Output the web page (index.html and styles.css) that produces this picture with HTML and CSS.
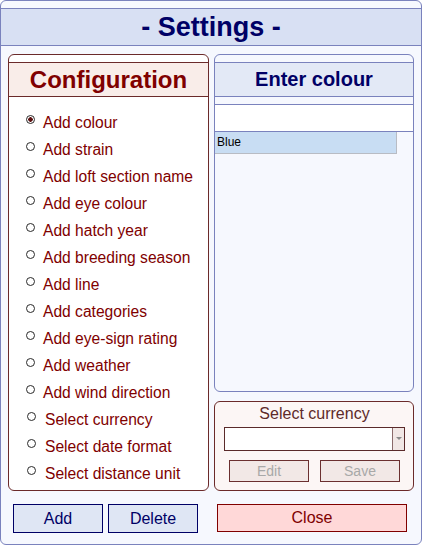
FILE: index.html
```html
<!DOCTYPE html>
<html>
<head>
<meta charset="utf-8">
<link rel="stylesheet" href="styles.css">
</head>
<body>
<div class="window">
  <div class="titlebar">- Settings -</div>
  <div class="content">
    <div class="col left">
      <div class="panel config">
        <div class="phead config-head">Configuration</div>
        <ul class="radios">
          <li class="on"><span class="radio"></span>Add colour</li>
          <li><span class="radio"></span>Add strain</li>
          <li><span class="radio"></span>Add loft section name</li>
          <li><span class="radio"></span>Add eye colour</li>
          <li><span class="radio"></span>Add hatch year</li>
          <li><span class="radio"></span>Add breeding season</li>
          <li><span class="radio"></span>Add line</li>
          <li><span class="radio"></span>Add categories</li>
          <li><span class="radio"></span>Add eye-sign rating</li>
          <li><span class="radio"></span>Add weather</li>
          <li><span class="radio"></span>Add wind direction</li>
          <li class="shift"><span class="radio"></span>Select currency</li>
          <li class="shift"><span class="radio"></span>Select date format</li>
          <li class="shift"><span class="radio"></span>Select distance unit</li>
        </ul>
      </div>
      <div class="btnrow">
        <button class="btn blue">Add</button>
        <button class="btn blue">Delete</button>
      </div>
    </div>
    <div class="col right">
      <div class="panel colour">
        <div class="phead colour-head">Enter colour</div>
        <div class="entry"></div>
        <div class="list">
          <div class="item">Blue</div>
        </div>
      </div>
      <div class="panel currency">
        <div class="cur-title">Select currency</div>
        <div class="select"><span class="sel-val"></span><span class="sel-arrow"></span></div>
        <div class="cur-btns">
          <button class="btn small">Edit</button>
          <button class="btn small">Save</button>
        </div>
      </div>
      <button class="btn close">Close</button>
    </div>
  </div>
</div>
</body>
</html>
```

FILE: styles.css
```css
* { box-sizing: border-box; }
html, body { margin: 0; padding: 0; background: #ffffff; }
body { font-family: "Liberation Sans", Arial, sans-serif; }

.window {
  width: 422px;
  height: 545px;
  border: 1px solid #7a82bd;
  border-radius: 6px;
  background: #f6f8fe;
  overflow: hidden;
}

.titlebar {
  margin-top: 7px;
  height: 38px;
  border-top: 1px solid #7a82bd;
  border-bottom: 1px solid #7a82bd;
  background: #d8e0f3;
  color: #000066;
  font-weight: bold;
  font-size: 27px;
  line-height: 36px;
  text-align: center;
}

.content {
  display: flex;
  gap: 5px;
  padding: 8px 7px 0 7px;
}

.col { display: flex; flex-direction: column; }
.left { width: 201px; }
.right { width: 200px; }

.panel {
  border: 1px solid #6b2a2a;
  border-radius: 6px;
  background: #ffffff;
  overflow: hidden;
}

.config { height: 437px; }

.phead {
  margin-top: 7px;
  height: 35px;
  border-top: 1px solid;
  border-bottom: 1px solid;
  text-align: center;
  font-weight: bold;
}

.config-head {
  border-color: #6b2a2a;
  background: #f9ede9;
  color: #800000;
  font-size: 24px;
  line-height: 33px;
}

.radios {
  list-style: none;
  margin: 0;
  padding: 12px 0 0 17px;
}

.radios li {
  display: flex;
  align-items: center;
  height: 27px;
  font-size: 15.6px;
  color: #800000;
}

.radio {
  width: 9px;
  height: 9px;
  border: 1px solid #2a2a2a;
  border-radius: 50%;
  background: #ffffff;
  margin-right: 8px;
  position: relative;
  top: -3px;
  flex: none;
}

.radios li.on .radio {
  background: radial-gradient(circle, #5a1010 0 2px, #ffffff 2.5px);
}

.radios li.shift { padding-left: 1px; }
.radios li.shift .radio { margin-right: 9px; }

.btnrow {
  display: flex;
  gap: 5px;
  padding: 13px 0 0 5px;
}

.btn {
  font-family: "Liberation Sans", Arial, sans-serif;
  font-size: 16px;
  padding: 0;
  cursor: default;
}

.btn.blue {
  width: 90px;
  height: 29px;
  border: 1px solid #000066;
  background: #dfe6f4;
  color: #000066;
}

.colour {
  height: 338px;
  border-color: #7a82bd;
  background: #f6f8fe;
}

.colour-head {
  border-color: #7a82bd;
  background: #e3e9f6;
  color: #000066;
  font-size: 20px;
  line-height: 33px;
  height: 35px;
  margin-top: 7px;
}

.entry {
  margin-top: 7px;
  height: 28px;
  border-top: 1px solid #7a82bd;
  border-bottom: 1px solid #7a82bd;
  background: #ffffff;
}

.list { padding: 0; }

.item {
  width: 182px;
  height: 22px;
  background: #c8ddf3;
  border-right: 1px solid #b8bcc4;
  border-bottom: 1px solid #b8bcc4;
  font-size: 12px;
  line-height: 21px;
  padding-left: 2px;
  color: #000000;
}

.currency {
  margin-top: 9px;
  height: 90px;
  background: #fcf6f5;
  padding: 2px 8px 0 9px;
}

.cur-title {
  text-align: center;
  font-size: 16px;
  line-height: 20px;
  color: #5e2a2a;
}

.select {
  margin-top: 3px;
  height: 24px;
  display: flex;
  border: 1px solid #5a2a2a;
  background: #ffffff;
}

.sel-val { flex: 1; }

.sel-arrow {
  width: 12px;
  border-left: 1px solid #8a6a6a;
  background: #f1e7e5;
  position: relative;
}

.sel-arrow::after {
  content: "";
  position: absolute;
  left: 3px;
  top: 9px;
  border-left: 3px solid transparent;
  border-right: 3px solid transparent;
  border-top: 3px solid #8a8a8a;
}

.cur-btns {
  display: flex;
  gap: 11px;
  margin-top: 9px;
  padding-left: 5px;
}

.btn.small {
  width: 80px;
  height: 22px;
  border: 1px solid #6b3030;
  background: #f2e8e6;
  color: #a8a8a8;
  font-size: 14px;
}

.btn.close {
  margin: 13px 0 0 3px;
  width: 190px;
  height: 28px;
  border: 1px solid #800000;
  background: #ffd8d8;
  color: #800000;
}
```
